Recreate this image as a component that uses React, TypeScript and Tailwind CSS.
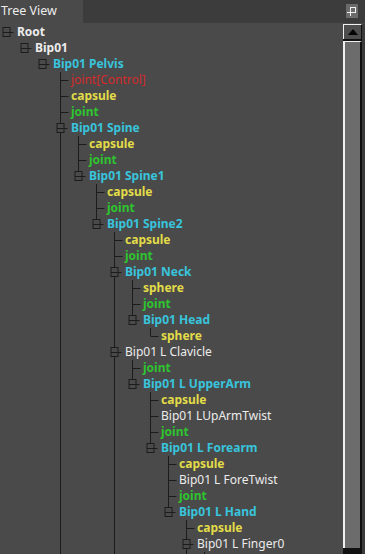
type Kind = "root" | "white" | "bone" | "capsule" | "joint" | "sphere" | "ctrl";

type Node = {
  name: string;
  kind: Kind;
  children?: Node[];
  more?: boolean; // list continues past what is shown
};

const tree: Node = {
  name: "Root",
  kind: "root",
  children: [
    {
      name: "Bip01",
      kind: "root",
      children: [
        {
          name: "Bip01 Pelvis",
          kind: "bone",
          more: true,
          children: [
            { name: "joint[Control]", kind: "ctrl" },
            { name: "capsule", kind: "capsule" },
            { name: "joint", kind: "joint" },
            {
              name: "Bip01 Spine",
              kind: "bone",
              children: [
                { name: "capsule", kind: "capsule" },
                { name: "joint", kind: "joint" },
                {
                  name: "Bip01 Spine1",
                  kind: "bone",
                  children: [
                    { name: "capsule", kind: "capsule" },
                    { name: "joint", kind: "joint" },
                    {
                      name: "Bip01 Spine2",
                      kind: "bone",
                      more: true,
                      children: [
                        { name: "capsule", kind: "capsule" },
                        { name: "joint", kind: "joint" },
                        {
                          name: "Bip01 Neck",
                          kind: "bone",
                          children: [
                            { name: "sphere", kind: "sphere" },
                            { name: "joint", kind: "joint" },
                            {
                              name: "Bip01 Head",
                              kind: "bone",
                              children: [{ name: "sphere", kind: "sphere" }],
                            },
                          ],
                        },
                        {
                          name: "Bip01 L Clavicle",
                          kind: "white",
                          children: [
                            { name: "joint", kind: "joint" },
                            {
                              name: "Bip01 L UpperArm",
                              kind: "bone",
                              children: [
                                { name: "capsule", kind: "capsule" },
                                { name: "Bip01 LUpArmTwist", kind: "white" },
                                { name: "joint", kind: "joint" },
                                {
                                  name: "Bip01 L Forearm",
                                  kind: "bone",
                                  children: [
                                    { name: "capsule", kind: "capsule" },
                                    { name: "Bip01 L ForeTwist", kind: "white" },
                                    { name: "joint", kind: "joint" },
                                    {
                                      name: "Bip01 L Hand",
                                      kind: "bone",
                                      more: true,
                                      children: [
                                        { name: "capsule", kind: "capsule" },
                                        {
                                          name: "Bip01 L Finger0",
                                          kind: "white",
                                          more: true,
                                          // next row only peeks in at the bottom edge
                                          children: [{ name: "", kind: "white" }],
                                        },
                                      ],
                                    },
                                  ],
                                },
                              ],
                            },
                          ],
                        },
                      ],
                    },
                  ],
                },
              ],
            },
          ],
        },
      ],
    },
  ],
};

const textClass: Record<Kind, string> = {
  root: "text-[#ececec] font-bold",
  white: "text-[#ececec]",
  bone: "text-[#38c4dc] font-bold",
  capsule: "text-[#e2dc48] font-bold",
  joint: "text-[#2fc42f] font-bold",
  sphere: "text-[#e2dc48] font-bold",
  ctrl: "text-[#d42a2a]",
};

type Row = {
  node: Node;
  level: number;
  last: boolean;
  first: boolean;
  open: boolean[]; // per ancestor column: does the line run through
};

function flatten(node: Node, level: number, last: boolean, first: boolean, open: boolean[], out: Row[]) {
  out.push({ node, level, last, first, open });
  const kids = node.children ?? [];
  kids.forEach((c, i) => {
    const isLast = i === kids.length - 1 && !node.more;
    flatten(c, level + 1, isLast, i === 0, [...open, !last], out);
  });
}

const rows: Row[] = [];
flatten(tree, 0, true, true, [], rows);

const LINE = "#1c1c1c";
const BG = "#4a4a4a";

function Guides({ row }: { row: Row }) {
  const { level, last, first, open, node } = row;
  const w = 17 + 18 * level;
  const cx = (k: number) => 6.5 + 18 * k;
  const hasKids = !!node.children?.length;
  return (
    <svg width={w} height={16} className="shrink-0">
      {open.map((on, k) =>
        k >= 1 && k < level && on ? (
          <line key={k} x1={cx(k)} y1={0} x2={cx(k)} y2={16} stroke={LINE} />
        ) : null
      )}
      {level >= 1 && !(first && hasKids) && (
        <line x1={cx(level)} y1={0} x2={cx(level)} y2={8} stroke={LINE} />
      )}
      {level >= 1 && !last && <line x1={cx(level)} y1={8} x2={cx(level)} y2={16} stroke={LINE} />}
      {hasKids ? (
        <>
          <rect x={cx(level) - 3.5} y={3.5} width={7} height={9} fill={BG} stroke={LINE} />
          <line x1={cx(level) - 3.5} y1={8.5} x2={cx(level) + 7} y2={8.5} stroke={LINE} />
        </>
      ) : (
        <line x1={cx(level)} y1={8.5} x2={cx(level) + 8} y2={8.5} stroke={LINE} />
      )}
    </svg>
  );
}

function PinIcon() {
  return (
    <div className="flex h-[14px] w-[12px] items-center justify-center bg-[#6b6b6b]">
      <svg width="12" height="14" viewBox="0 0 12 14">
        <line x1="1" y1="8.5" x2="4" y2="8.5" stroke="#f2f2f2" />
        <line x1="4.5" y1="3" x2="4.5" y2="12" stroke="#f2f2f2" />
        <rect x="4.5" y="3.5" width="5" height="5" fill="none" stroke="#f2f2f2" />
      </svg>
    </div>
  );
}

function ScrollBar() {
  return (
    <div className="flex h-full w-[22px] shrink-0">
      <div className="flex w-[19px] flex-col bg-[#111] pb-[6px]">
        <div className="flex h-[15px] items-center justify-center border-l border-t border-[#f0f0f0] border-r border-r-[#111] bg-[#4e4e4e]">
          <svg width="10" height="6" viewBox="0 0 10 6">
            <polygon points="0,6 10,6 5,0" fill="#050505" />
          </svg>
        </div>
        <div className="mt-[2px] flex-1 border-l-2 border-t border-[#f0f0f0] border-r-2 border-r-[#111] bg-[#6c6c6c]" />
      </div>
      <div className="w-[3px] bg-[#3c3c3c]" />
    </div>
  );
}

export default function App() {
  return (
    <div
      className="flex h-[554px] w-[365px] flex-col overflow-hidden bg-[#4a4a4a] text-[12px]"
      style={{ fontFamily: '"Noto Sans", "Open Sans", sans-serif' }}
    >
      <div className="flex h-[23px] shrink-0 items-stretch bg-[#3c3c3c]">
        <div className="flex w-[83px] items-center bg-[#4a4a4a] pl-[1px] text-[12.5px] text-[#ececec]">
          Tree View
        </div>
        <div className="flex-1" />
        <div className="flex items-start pr-[7px] pt-[4px]">
          <PinIcon />
        </div>
      </div>
      <div className="flex min-h-0 flex-1 pt-[1px]">
        <div className="min-w-0 flex-1 overflow-hidden pr-[1px]">
          {rows.map((r, i) => (
            <div key={i} className="flex h-[16px] items-center whitespace-nowrap">
              <Guides row={r} />
              <span className={`leading-[16px] ${textClass[r.node.kind]}`}>{r.node.name}</span>
            </div>
          ))}
        </div>
        <ScrollBar />
      </div>
    </div>
  );
}
